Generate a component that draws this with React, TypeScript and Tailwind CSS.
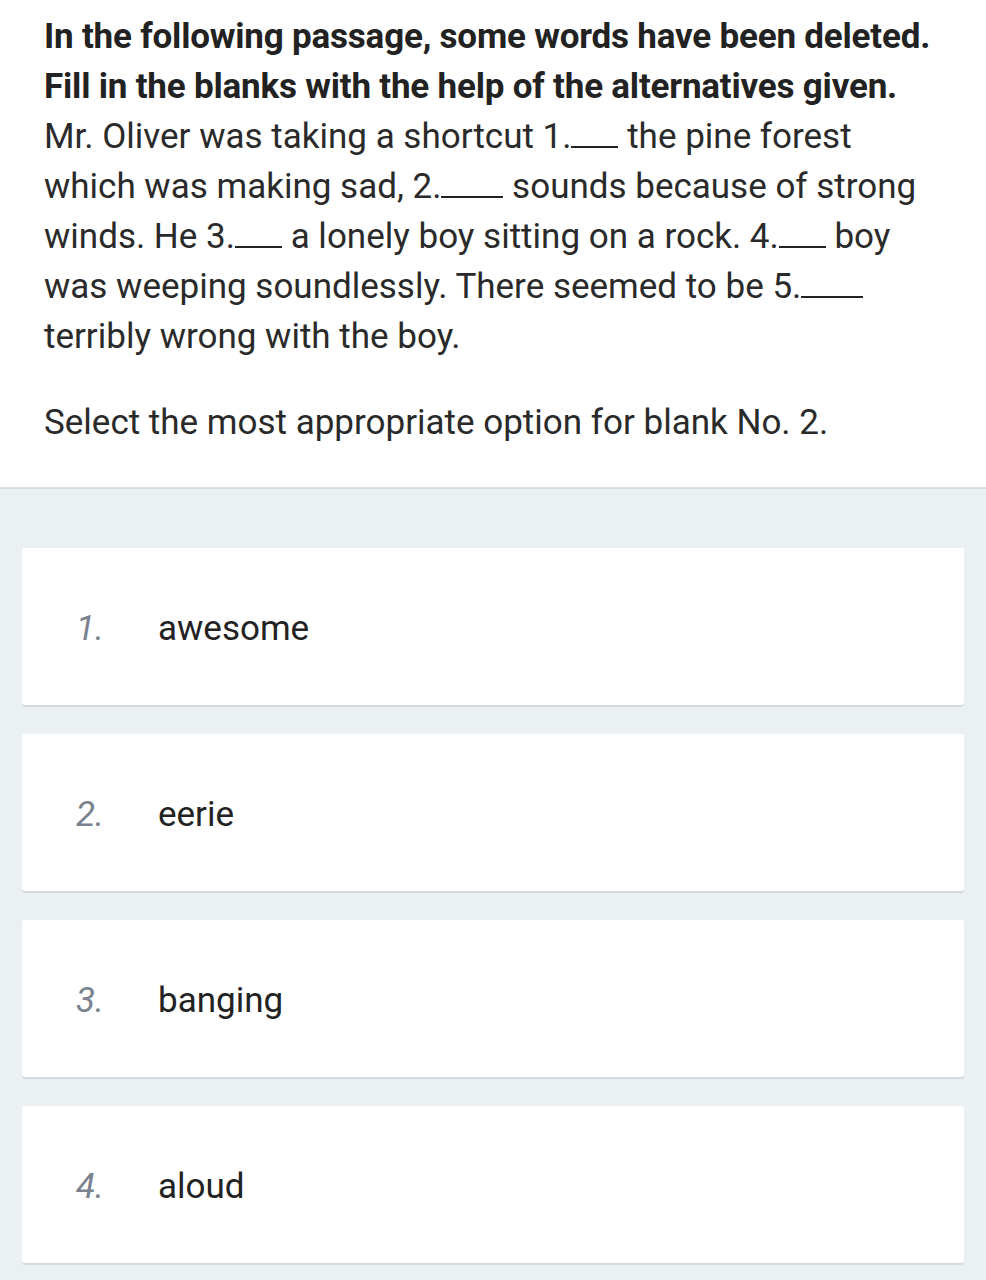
const OPTIONS = ["awesome", "eerie", "banging", "aloud"];

function Blank({ w }: { w: string }) {
  return <span className={`inline-block ${w} border-b-2 border-[#222] align-baseline`} />;
}

export default function App() {
  return (
    <div className="min-h-screen bg-[#ebf0f3] font-['Roboto',sans-serif] text-[#222]">
      <div className="border-b-2 border-[#d9dee2] bg-white px-[44px] pt-[12px] pb-[39px] text-[35px] leading-[50px] whitespace-nowrap">
        <p className="font-bold tracking-[-0.2px]">
          <span className="block">In the following passage, some words have been deleted.</span>
          <span className="block">Fill in the blanks with the help of the alternatives given.</span>
        </p>
        <p className="text-[#2a2a2a]">
          <span className="block">
            Mr. Oliver was taking a shortcut 1.<Blank w="w-[47px]" /> the pine forest
          </span>
          <span className="block">
            which was making sad, 2.<Blank w="w-[62px]" /> sounds because of strong
          </span>
          <span className="block">
            winds. He 3.<Blank w="w-[47px]" /> a lonely boy sitting on a rock. 4.<Blank w="w-[47px]" /> boy
          </span>
          <span className="block">
            was weeping soundlessly. There seemed to be 5.<Blank w="w-[62px]" />
          </span>
          <span className="block">terribly wrong with the boy.</span>
        </p>
        <p className="mt-[36px] text-[#2a2a2a]">Select the most appropriate option for blank No. 2.</p>
      </div>
      <div className="flex flex-col gap-[29px] px-[22px] pt-[59px] pb-[16px]">
        {OPTIONS.map((o, i) => (
          <div
            key={o}
            className="flex h-[157px] items-center rounded-[3px] bg-white pt-[5px] shadow-[0_2px_1px_#d3d9de]"
          >
            <span className="w-[136px] pl-[54px] text-[35px] italic text-[#7a8290]">{i + 1}.</span>
            <span className="text-[35px] text-[#222]">{o}</span>
          </div>
        ))}
      </div>
    </div>
  );
}
